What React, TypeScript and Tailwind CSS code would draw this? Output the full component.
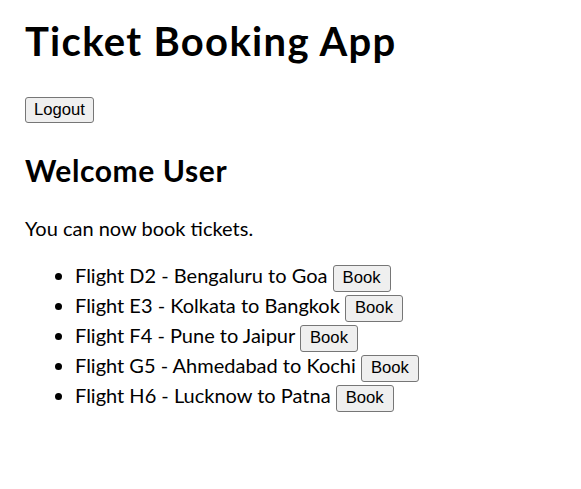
import React from "react";

const flights = [
  "Flight D2 - Bengaluru to Goa",
  "Flight E3 - Kolkata to Bangkok",
  "Flight F4 - Pune to Jaipur",
  "Flight G5 - Ahmedabad to Kochi",
  "Flight H6 - Lucknow to Patna",
];

const btn =
  "inline-flex h-[26px] items-center rounded-[3px] border border-[#767676] bg-[#efefef] font-['Liberation_Sans',Arial,sans-serif] text-[16.67px] leading-none text-black";

export default function App() {
  return (
    <div className="min-h-screen bg-white px-[25px] pt-[14px] font-['Lato',sans-serif] text-black">
      <h1 className="text-[40px] font-bold leading-[54px] tracking-[1.3px]">Ticket Booking App</h1>
      <div className="mt-[29px]">
        <button className={btn + " px-[8px]"}>Logout</button>
      </div>
      <h2 className="mt-[27px] text-[30px] font-bold leading-[40px] tracking-[0.6px]">Welcome User</h2>
      <p className="mt-[25px] text-[20px] leading-[27px]">You can now book tickets.</p>
      <ul className="mt-[18px] list-disc pl-[50px] text-[20px]">
        {flights.map((f) => (
          <li key={f} className="h-[30px] leading-[30px]">
            {f} <button className={btn + " h-[27px] px-[9px] align-middle"}>Book</button>
          </li>
        ))}
      </ul>
    </div>
  );
}
